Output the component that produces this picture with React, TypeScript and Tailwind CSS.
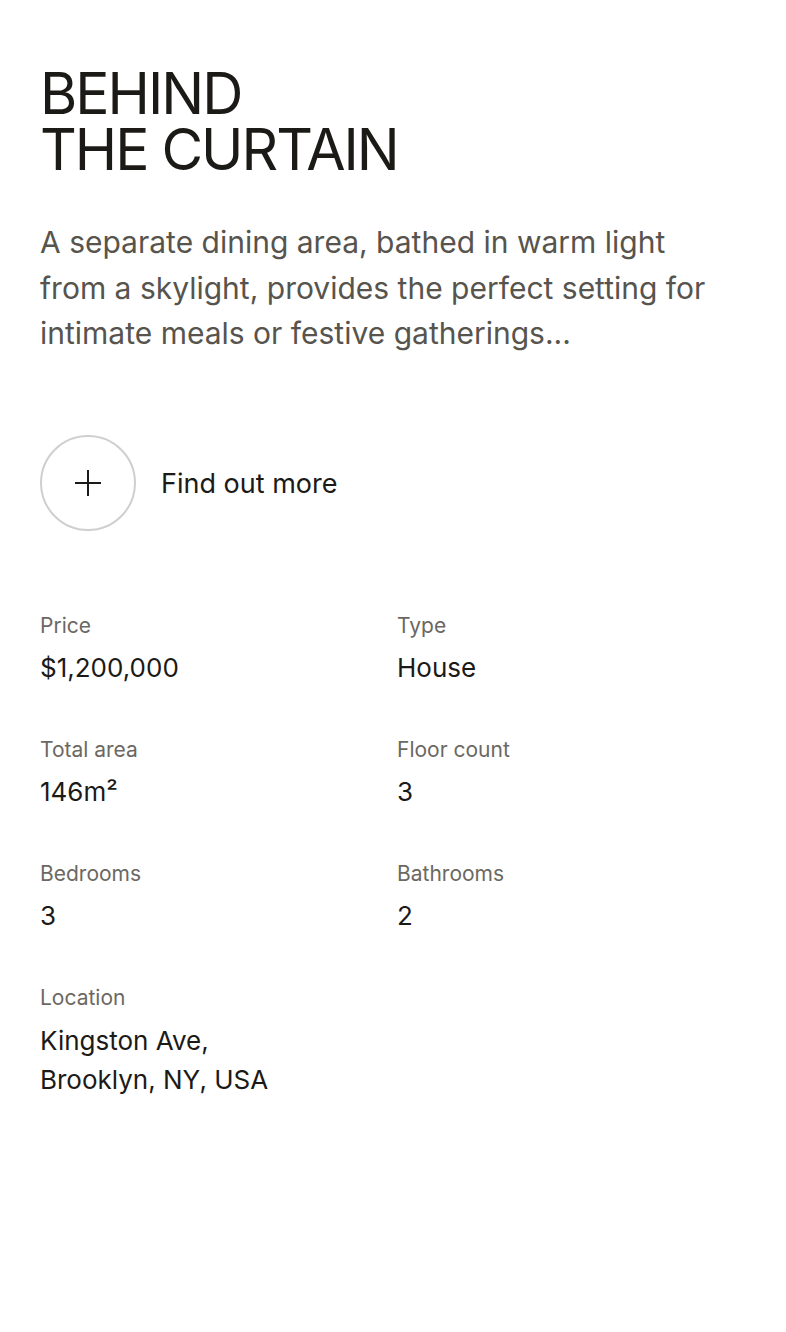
const specs = [
  { label: "Price", value: "$1,200,000" },
  { label: "Type", value: "House" },
  { label: "Total area", value: "146m²" },
  { label: "Floor count", value: "3" },
  { label: "Bedrooms", value: "3" },
  { label: "Bathrooms", value: "2" },
];

export default function App() {
  return (
    <div
      className="min-h-[1332px] w-full bg-white px-10 pt-[66px] text-[#1c1a17]"
      style={{ fontFamily: "Inter, 'Liberation Sans', sans-serif" }}
    >
      <h1 className="text-[57px] font-normal leading-[56px] tracking-[-0.035em]">
        BEHIND
        <br />
        THE CURTAIN
      </h1>

      <p className="mt-[42px] max-w-[680px] text-[30px] leading-[45.5px] text-[#57544e]">
        A separate dining area, bathed in warm light from a skylight, provides the perfect setting for intimate meals or
        festive gatherings...
      </p>

      <a href="#" className="mt-[78px] flex items-center gap-[25px]">
        <span className="flex h-[96px] w-[96px] items-center justify-center rounded-full border-2 border-[#d0cfcd]">
          <svg width="26" height="26" viewBox="0 0 26 26" fill="none" stroke="#1c1a17" strokeWidth="2">
            <path d="M13 0v26M0 13h26" />
          </svg>
        </span>
        <span className="pt-[3px] text-[27px]">Find out more</span>
      </a>

      <div className="mt-[81px] grid grid-cols-2 gap-x-2 gap-y-[50px]">
        {specs.map((s) => (
          <div key={s.label}>
            <div className="text-[21px] leading-[28px] text-[#6b6862]">{s.label}</div>
            <div className="mt-[10px] text-[26px] leading-[36px]">{s.value}</div>
          </div>
        ))}
        <div>
          <div className="text-[21px] leading-[28px] text-[#6b6862]">Location</div>
          <div className="mt-[9px] text-[26px] leading-[39px]">
            Kingston Ave,
            <br />
            Brooklyn, NY, USA
          </div>
        </div>
      </div>
    </div>
  );
}
